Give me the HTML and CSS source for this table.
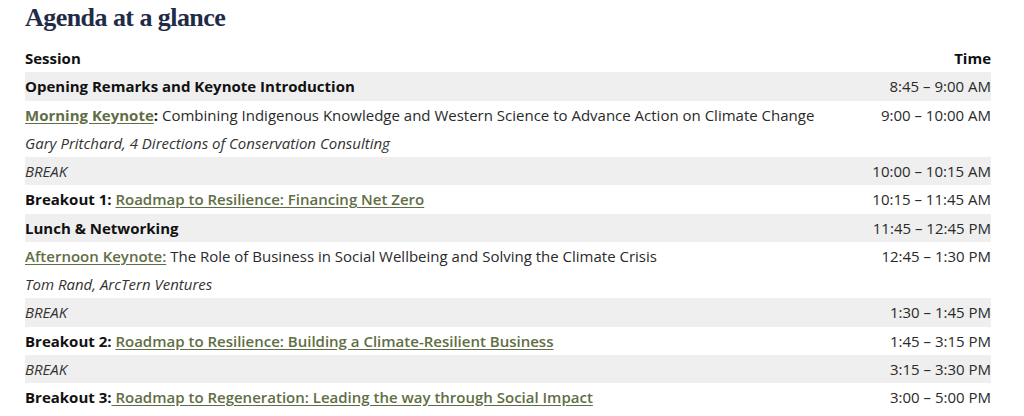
FILE: index.html
```html
<!DOCTYPE html>
<html>
<head>
<meta charset="utf-8">
<link rel="stylesheet" href="styles.css">
</head>
<body>
<section class="agenda">
  <h2 class="title">Agenda at a glance</h2>
  <table class="agenda-table">
    <thead>
      <tr><th class="col-session">Session</th><th class="col-time">Time</th></tr>
    </thead>
    <tbody>
      <tr><td><strong>Opening Remarks and Keynote Introduction</strong></td><td class="time">8:45 – 9:00 AM</td></tr>
      <tr><td><strong><a href="#">Morning Keynote</a>:</strong> Combining Indigenous Knowledge and Western Science to Advance Action on Climate Change<br><em>Gary Pritchard, 4 Directions of Conservation Consulting</em></td><td class="time">9:00 – 10:00 AM</td></tr>
      <tr><td><em>BREAK</em></td><td class="time">10:00 – 10:15 AM</td></tr>
      <tr><td><strong>Breakout 1:</strong> <a href="#">Roadmap to Resilience: Financing Net Zero</a></td><td class="time">10:15 – 11:45 AM</td></tr>
      <tr><td><strong>Lunch &amp; Networking</strong></td><td class="time">11:45 – 12:45 PM</td></tr>
      <tr><td><a href="#">Afternoon Keynote:</a> The Role of Business in Social Wellbeing and Solving the Climate Crisis<br><em>Tom Rand, ArcTern Ventures</em></td><td class="time">12:45 – 1:30 PM</td></tr>
      <tr><td><em>BREAK</em></td><td class="time">1:30 – 1:45 PM</td></tr>
      <tr><td><strong>Breakout 2:</strong> <a href="#">Roadmap to Resilience: Building a Climate-Resilient Business</a></td><td class="time">1:45 – 3:15 PM</td></tr>
      <tr><td><em>BREAK</em></td><td class="time">3:15 – 3:30 PM</td></tr>
      <tr><td><strong>Breakout 3:</strong><a href="#"> Roadmap to Regeneration: Leading the way through Social Impact</a></td><td class="time">3:00 – 5:00 PM</td></tr>
    </tbody>
  </table>
</section>
</body>
</html>
```

FILE: styles.css
```css
html, body {
  margin: 0;
  padding: 0;
  background: #ffffff;
}
body {
  font-family: "Open Sans", "Liberation Sans", sans-serif;
  color: #2a2a2a;
}
.agenda {
  padding: 0 33px 0 25px;
}
.title {
  margin: 0;
  padding: 0;
  height: 44px;
  font-family: "Liberation Serif", "DejaVu Serif", serif;
  font-weight: 700;
  font-size: 26px;
  line-height: 36px;
  color: #1f2b47;
  letter-spacing: -0.55px;
}
.agenda-table {
  width: 100%;
  border-collapse: collapse;
  font-size: 15px;
  line-height: 28.25px;
}
.agenda-table th,
.agenda-table td {
  padding: 0;
  vertical-align: top;
  text-align: left;
}
.agenda-table th {
  font-weight: 700;
  color: #111111;
}
.agenda-table .col-time,
.agenda-table .time {
  text-align: right;
  white-space: nowrap;
  padding-left: 20px;
}
.agenda-table tbody tr:nth-child(odd) {
  background: #efefef;
}
.agenda-table strong {
  color: #111111;
}
.agenda-table em {
  color: #333333;
}
.agenda-table a {
  color: #5f6e45;
  font-weight: 600;
  text-decoration: underline;
  text-underline-offset: 2px;
}
.agenda-table strong a {
  font-weight: 700;
}
```
